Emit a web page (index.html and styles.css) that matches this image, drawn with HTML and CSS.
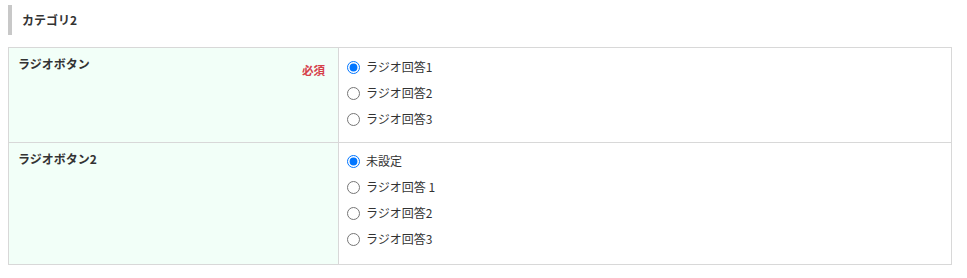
FILE: index.html
```html
<!DOCTYPE html>
<html lang="ja">
<head>
<meta charset="utf-8">
<title>カテゴリ2</title>
<link rel="stylesheet" href="styles.css">
</head>
<body>
<div class="page">
  <h2 class="cat-title">カテゴリ2</h2>
  <div class="form">
    <div class="label-cell">
      <span class="label">ラジオボタン</span>
      <span class="required">必須</span>
    </div>
    <div class="input-cell">
      <label class="opt"><input type="radio" name="r1" checked><span>ラジオ回答1</span></label>
      <label class="opt"><input type="radio" name="r1"><span>ラジオ回答2</span></label>
      <label class="opt"><input type="radio" name="r1"><span>ラジオ回答3</span></label>
    </div>
    <div class="label-cell row-sep">
      <span class="label">ラジオボタン2</span>
    </div>
    <div class="input-cell row-sep last">
      <label class="opt"><input type="radio" name="r2" checked><span>未設定</span></label>
      <label class="opt"><input type="radio" name="r2"><span>ラジオ回答 1</span></label>
      <label class="opt"><input type="radio" name="r2"><span>ラジオ回答2</span></label>
      <label class="opt"><input type="radio" name="r2"><span>ラジオ回答3</span></label>
    </div>
  </div>
</div>
</body>
</html>
```
FILE: styles.css
```css
html, body {
  margin: 0;
  padding: 0;
  background: #fff;
}
body {
  font-family: "Noto Sans CJK JP", "Noto Sans", sans-serif;
  color: #333;
  font-size: 12px;
}
.page {
  padding: 5px 15px 0 8px;
}
.cat-title {
  margin: 0 0 12px;
  height: 30px;
  box-sizing: border-box;
  border-left: 4px solid #c8c8c8;
  padding-left: 10px;
  font-size: 12px;
  font-weight: bold;
  line-height: 30px;
  color: #333;
}
.form {
  display: grid;
  grid-template-columns: 330px 1fr;
  border: 1px solid #d8d8d8;
}
.label-cell {
  box-sizing: border-box;
  background: #f2fff8;
  border-right: 1px solid #d8d8d8;
  padding: 7px 13px 0 9px;
  display: flex;
  justify-content: space-between;
  align-items: flex-start;
}
.label {
  font-weight: bold;
  line-height: 18px;
}
.required {
  color: #d6404a;
  font-weight: bold;
  font-size: 11.5px;
  line-height: 18px;
  margin-top: 6px;
}
.input-cell {
  padding: 8px 8px;
  display: flex;
  flex-direction: column;
}
.input-cell.last {
  padding-top: 7px;
  padding-bottom: 10px;
}
.row-sep {
  border-top: 1px solid #d8d8d8;
}
.opt {
  display: flex;
  align-items: center;
  height: 22px;
  margin-bottom: 4px;
  line-height: 22px;
}
.opt input {
  margin: 0 6px 0 0;
  width: 13px;
  height: 13px;
}
.opt span {
  font-size: 12px;
}
```
